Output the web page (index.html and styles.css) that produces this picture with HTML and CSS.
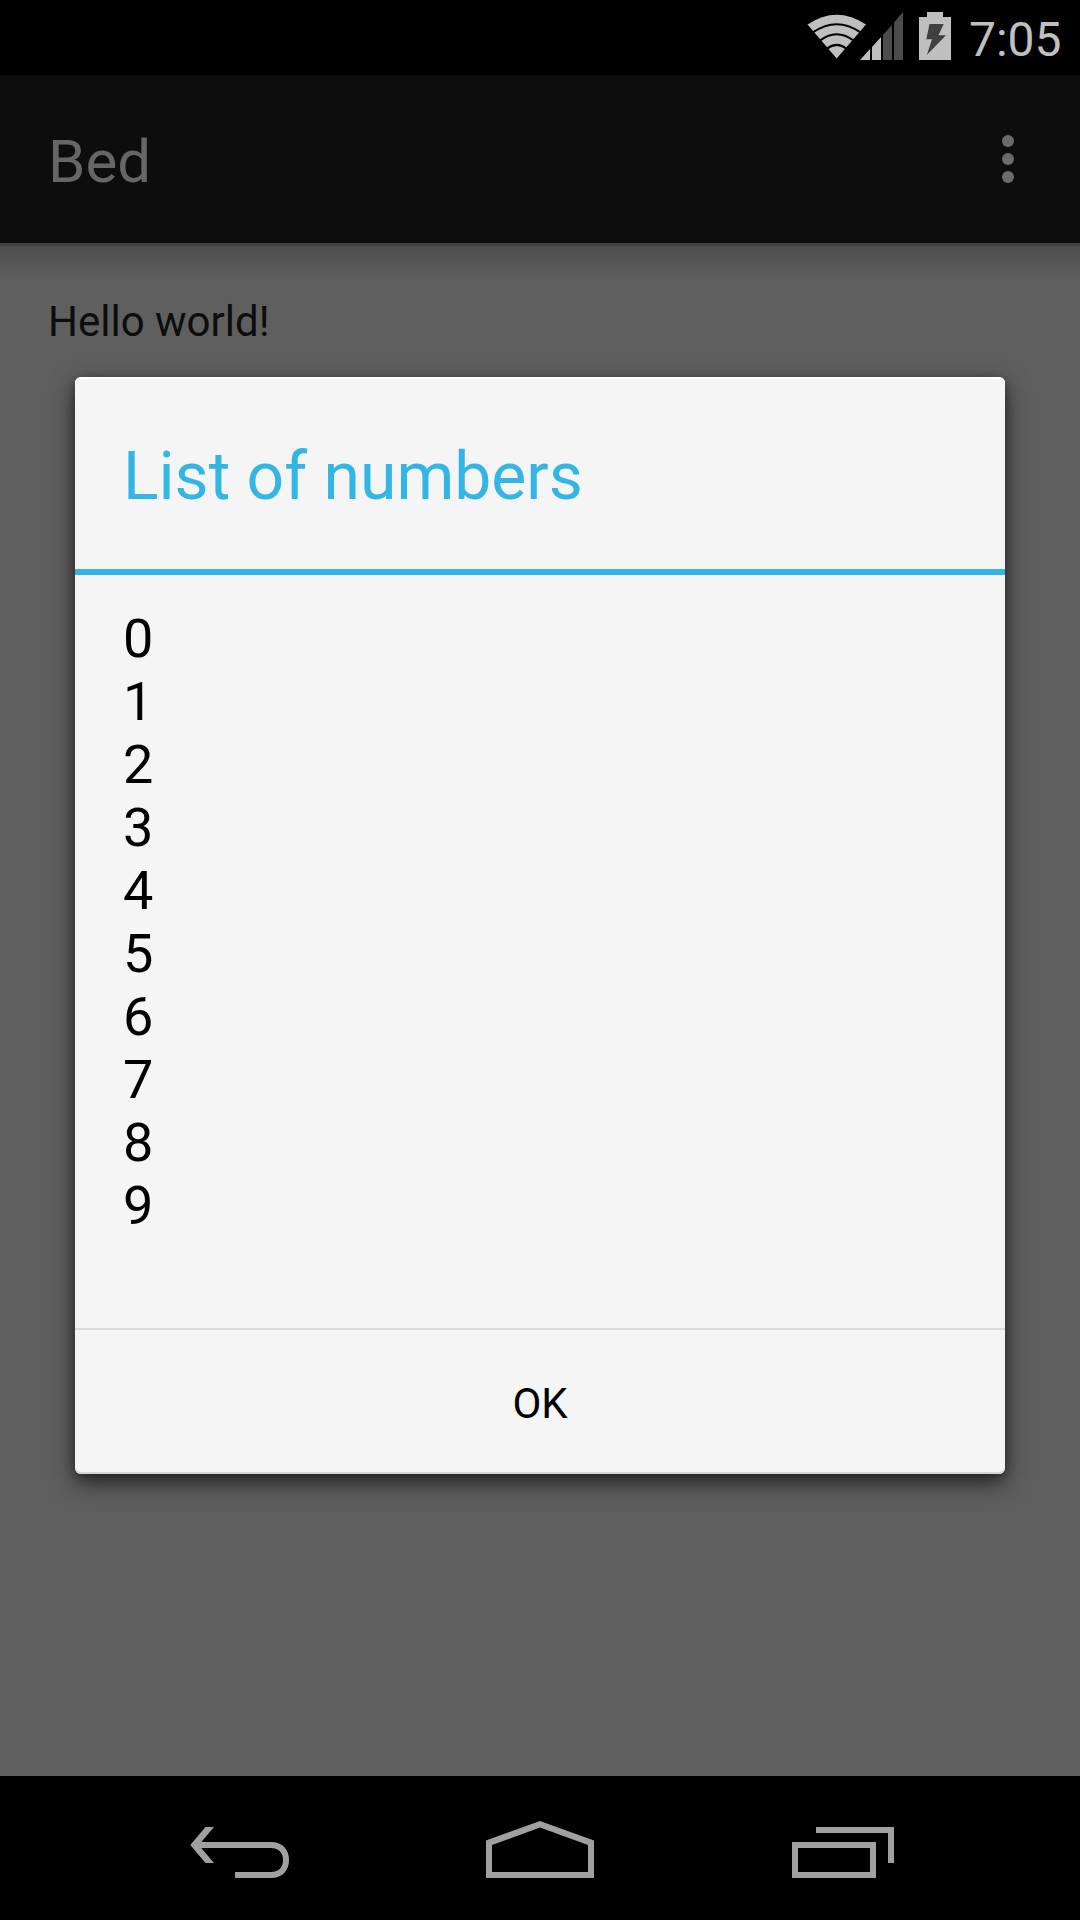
FILE: index.html
```html
<!DOCTYPE html>
<html lang="en">
<head>
  <meta charset="UTF-8">
  <meta name="viewport" content="width=device-width, initial-scale=1.0">
  <title>Bed</title>
  <link rel="stylesheet" href="styles.css">
</head>
<body>
  <div class="status-bar">
    <svg class="status-icons" width="170" height="75" viewBox="0 0 170 75">
      <!-- wifi -->
      <path fill="#bfbfbf" d="M7.5 24.5Q36.7 5 66 24.5L36.7 58.5Z"/>
      <g fill="none" stroke="#000" stroke-width="2">
        <path d="M13 32.3Q36.7 16 60.5 32.3"/>
        <path d="M20 40.5Q36.7 28 53.5 40.5"/>
        <path d="M27 48.8Q36.7 41 46.5 48.8"/>
      </g>
      <!-- signal -->
      <path fill="#bfbfbf" d="M60 60L70 49V60ZM72 47L81 37V60H72Z"/>
      <path fill="#4c4c4c" d="M83 35L92 25V60H83ZM94 22.5L103 12V60H94Z"/>
      <!-- battery -->
      <path fill="#bfbfbf" d="M119 17H127V12H143V17H151V60H119Z"/>
      <path fill="#404040" d="M129.5 24H143.7L138.5 35.3H146L126.8 55L132 39.3H126.3Z"/>
    </svg>
    <span class="clock">7:05</span>
  </div>

  <div class="action-bar">
    <h1 class="app-title">Bed</h1>
    <div class="overflow">
      <span class="dot"></span>
      <span class="dot"></span>
      <span class="dot"></span>
    </div>
  </div>

  <div class="content">
    <p class="hello">Hello world!</p>
    <div class="dialog">
      <h2 class="dialog-title">List of numbers</h2>
      <ul class="number-list">
        <li>0</li>
        <li>1</li>
        <li>2</li>
        <li>3</li>
        <li>4</li>
        <li>5</li>
        <li>6</li>
        <li>7</li>
        <li>8</li>
        <li>9</li>
      </ul>
      <button class="ok-button">OK</button>
    </div>
  </div>

  <div class="nav-bar">
    <svg width="120" height="144" viewBox="0 0 120 144">
      <path fill="#a0a0a0" d="M10.3 69L25.5 51H34L21.3 66H91C103 66 109 74 109 84C109 94 103 102 91 102H55V96H91C99 96 103 91 103 84C103 77 99 72 91 72H21.3L34 87H25.5Z"/>
    </svg>
    <svg width="120" height="144" viewBox="0 0 120 144">
      <path fill="#a0a0a0" fill-rule="evenodd" d="M6 64.5L60 45L114 64.5V102H6ZM12 69V96H108V69L60 51.5Z"/>
    </svg>
    <svg width="120" height="144" viewBox="0 0 120 144">
      <path fill="#a0a0a0" d="M36 51H114V87H108V57H36Z"/>
      <path fill="none" stroke="#a0a0a0" stroke-width="6" d="M15 69H93V99H15Z"/>
    </svg>
  </div>
</body>
</html>
```
FILE: styles.css
```css
* {
  box-sizing: border-box;
}
body {
  font-family: Roboto, "Liberation Sans", sans-serif;
  background-color: #5f5f5f;
  margin: 0;
  height: 1920px;
  display: flex;
  flex-direction: column;
  overflow: hidden;
}
h1, h2, p, ul {
  margin: 0;
  padding: 0;
  font-weight: 400;
}
.status-bar {
  height: 75px;
  background-color: #000;
  display: flex;
  justify-content: flex-end;
  padding-right: 19px;
}
.status-icons {
  flex: none;
  margin-right: -1px;
}
.clock {
  width: 92px;
  font-size: 48px;
  line-height: 80px;
  color: #bfbfbf;
  text-align: right;
  white-space: nowrap;
}
.action-bar {
  height: 168px;
  background-color: #0d0d0d;
  display: flex;
  align-items: center;
  justify-content: space-between;
  padding: 0 66px 0 48px;
}
.app-title {
  padding-top: 5px;
  font-size: 60px;
  line-height: 70px;
  color: #666;
}
.overflow {
  display: flex;
  flex-direction: column;
  gap: 6px;
}
.dot {
  width: 12px;
  height: 12px;
  border-radius: 50%;
  background-color: #6b6b6b;
}
.content {
  flex: 1;
  border-top: 3px solid #434343;
  background: linear-gradient(#4d4d4d, #5f5f5f 33px);
}
.hello {
  height: 131px;
  padding: 51px 48px 0;
  font-size: 42px;
  line-height: 49px;
  color: #0d0d0d;
}
.dialog {
  width: 930px;
  height: 1097px;
  margin: 0 auto;
  display: flex;
  flex-direction: column;
  background-color: #f5f5f5;
  border-radius: 6px;
  box-shadow: 0 9px 24px rgba(0, 0, 0, 0.6), 0 2px 10px rgba(0, 0, 0, 0.3), inset 0 2px #fff, inset 0 -2px #d4d6d5;
}
.dialog-title {
  height: 198px;
  padding-left: 48px;
  border-bottom: 6px solid #33b5e5;
  font-size: 66px;
  line-height: 200px;
  color: #33b5e5;
}
.number-list {
  flex: 1;
  padding: 32px 48px 0;
  list-style: none;
  font-size: 54px;
  line-height: 63px;
  color: #000;
}
.ok-button {
  height: 146px;
  padding: 3px 0 0;
  border: none;
  border-top: 2px solid #dcdcdc;
  background: none;
  font-family: inherit;
  font-size: 42px;
  color: #000;
}
.nav-bar {
  height: 144px;
  background-color: #000;
  display: flex;
  justify-content: center;
  gap: 180px;
}
```
